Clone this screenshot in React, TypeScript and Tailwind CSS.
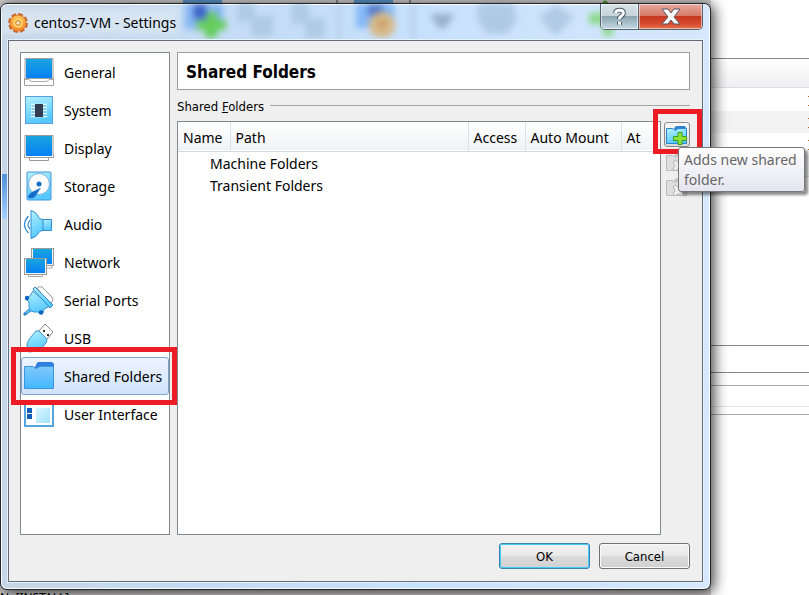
import type { ReactNode } from 'react';

const Monitor = ({ x = 0, y = 0, w = 29, h = 22 }: { x?: number; y?: number; w?: number; h?: number }) => (
  <g>
    <rect x={x + 0.5} y={y + 0.5} width={w - 1} height={h - 1} fill="#f2f2f2" stroke="#9a9a9a" />
    <rect x={x + 2} y={y + 1} width={w - 4} height={h - 3} fill="url(#screen)" />
  </g>
);

const icons: Record<string, ReactNode> = {
  General: (
    <>
      <path d="M.5 20v7.500h29V20" fill="#fff" stroke="#a0a0a0" />
      <path d="M1 .500h28v20H1z" fill="#f0f0f0" stroke="#a0a0a0" />
      <path d="M2 1h26v19H2z" fill="url(#screen)" />
      <path d="M1 21.500h4q1 2 3 2h14q2 0 3-2h4" fill="#fff" stroke="#aaa" />
    </>
  ),
  System: (
    <>
      <rect x="1.500" y=".5" width="27" height="27" fill="url(#cyan)" stroke="#5a9fe0" />
      <path d="M7 8.500h16M7 11.500h16M7 14.500h16M7 17.500h16M7 20.500h16" stroke="#e8fbff" strokeWidth="1.500" />
      <path d="M8 10h14M8 13h14M8 16h14M8 19h14" stroke="#6faec8" strokeWidth=".7" />
      <rect x="11" y="8" width="8" height="13" fill="#343c50" />
    </>
  ),
  Display: (
    <>
      <path d="M5.500 23v3.500h19V23" fill="#fff" stroke="#999" />
      <path d="M1 1.500h28V21h.5v2.500H.5V21H1z" fill="#fff" stroke="#999" />
      <rect x="2" y="2" width="26" height="20" fill="url(#screen)" />
    </>
  ),
  Storage: (
    <>
      <rect x="3" y="0" width="24" height="28" rx="1" fill="url(#cyan)" stroke="#4597db" />
      <circle cx="15" cy="12" r="10.500" fill="#fff" stroke="#7cb2dc" />
      <circle cx="15" cy="12" r="2.500" fill="#126cc8" />
      <path d="M4.500 24q1-3 4-4l8-4-5 8q-2 3-6 2-2 0-1-2z" fill="#126cc8" stroke="#3688d8" strokeWidth=".5" />
    </>
  ),
  Audio: (
    <>
      <path d="M18.500 9.500h9v11h-9z" fill="url(#cyan)" stroke="#318bd0" />
      <path d="M7 .500q5 1 8 7 1 2 4 2v11q-3 0-4 2-3 5-8 6z" fill="url(#cyan)" stroke="#318bd0" />
      <path d="M4.500 6Q-3.500 15 4.500 23M6 10q-4 5 0 9" fill="none" stroke="#318bd0" strokeWidth="1.200" />
    </>
  ),
  Network: (
    <>
      <path d="M22 18v2h6v-2" fill="#fff" stroke="#aaa" />
      <Monitor x={7} y={0} w={23} h={18} />
      <path d="M4.500 26v2.500h14V26" fill="#fff" stroke="#aaa" />
      <Monitor x={0} y={10} w={23} h={17} />
    </>
  ),
  'Serial Ports': (
    <>
      <path d="M13 2q2-2 5-1l10 10q2 3 0 5l-2 2z" fill="#fff" stroke="#999" />
      <path d="M1 28l5-4" stroke="#2e89ce" strokeWidth="3.500" strokeLinecap="round" />
      <path d="M2 27l4-3" stroke="#6dccfa" strokeWidth="1.500" />
      <path d="M9 5l-3 5-4 2q-1 2 1 2l2 2v5q0 4 5 5h4l3 2 2-1 1-4 6-3z" fill="url(#cyan)" stroke="#3693d5" strokeLinejoin="round" />
      <path d="M9 3l2-2 18 18-3 3z" fill="url(#cyan)" stroke="#2e89ce" strokeLinejoin="round" />
      <circle cx="3" cy="12" r="2.200" fill="#1264bd" />
      <circle cx="17" cy="26.500" r="2.200" fill="#1264bd" />
    </>
  ),
  USB: (
    <>
      <path d="M15 7l6-7 8 8-6 7z" fill="#fff" stroke="#888" />
      <path d="M19 6h2v2h-2zM23 10h2v2h-2z" fill="#333" />
      <path d="M3 27V20q1-4 4-7l5-6q2-1 4 1l6 6q2 2 0 5l-5 6q-4 3-12 3z" fill="url(#cyan)" stroke="#4196d8" />
    </>
  ),
  'Shared Folders': (
    <>
      <path d="M11 5l2-4q0-1 2-1h13l2 2v8H11z" fill="#2f7fe2" />
      <path d="M.5 4.500H9l3 2 4-2h13.500v22H.5z" fill="url(#folder)" stroke="#3d94df" />
    </>
  ),
  'User Interface': (
    <>
      <rect x="1" y="1" width="28" height="25" fill="#fff" stroke="#55a5e0" strokeWidth="2" />
      <rect x="1" y="1" width="28" height="4" fill="#1e69c6" />
      <path d="M3 8h5v5H3zM3 14h5v5H3z" fill="#125eb8" />
      <rect x="12" y="8" width="14" height="15" fill="url(#pale)" />
    </>
  ),
};

const sections = Object.keys(icons);

const Callout = ({ className }: { className: string }) => (
  <span className={`pointer-events-none absolute z-10 border-[5px] border-[#ed1c24] ${className}`} />
);

const Defs = () => (
  <svg className="absolute size-0" aria-hidden="true">
    <defs>
      <linearGradient id="screen" x2="0" y2="1"><stop stopColor="#18a5dd" /><stop offset="1" stopColor="#0580f7" /></linearGradient>
      <linearGradient id="cyan" x2="0.3" y2="1"><stop stopColor="#b4f2ff" /><stop offset="1" stopColor="#55c8ff" /></linearGradient>
      <linearGradient id="folder" x2="0" y2="1"><stop stopColor="#80c8fa" /><stop offset="1" stopColor="#42b8ff" /></linearGradient>
      <linearGradient id="pale" x2="1" y2="1"><stop stopColor="#d8f6ff" /><stop offset="1" stopColor="#a5e3fa" /></linearGradient>
      <linearGradient id="gear" x2="0" y2="1"><stop stopColor="#ffc15a" /><stop offset="1" stopColor="#f58a26" /></linearGradient>
    </defs>
  </svg>
);

const Gear = () => (
  <svg viewBox="0 0 20 20" className="size-5 shrink-0" aria-hidden="true">
    <circle cx="10" cy="10" r="8" fill="none" stroke="#c9682c" strokeWidth="4" strokeDasharray="4.300 1.980" />
    <circle cx="10" cy="10" r="8" fill="url(#gear)" stroke="#d97a25" />
    <circle cx="10" cy="10" r="5" fill="#ffcf68" />
    <circle cx="10" cy="10" r="2.200" fill="#fff1d5" stroke="#c87325" />
  </svg>
);

const GlassReflections = () => (
  <svg className="pointer-events-none absolute inset-x-0 top-0 h-9 w-full" aria-hidden="true">
    <g className="blur-[3px]">
      <path d="M0 4h178v26H0z" fill="#e6edf5" opacity=".55" />
      <path d="M184 0h38v25h-38z" fill="#85b5f3" />
      <path d="M193 0h12v15h-12z" fill="#3c62c4" />
      <path d="M206 8h10v8h9v10h-9v8h-12v-8h-8V16h10z" fill="#66cd5c" />
      <g fill="#b1cae3">
        <path d="M236 0h18v12h18v20h-22V18h-14zM290 0h18v14h16v20h-20V20h-14z" />
        <path d="M477 0h36l3 16-10 14h-20l-10-14zM538 13l16-12 19 12-19 19z" />
      </g>
      <path d="M338 0v38M412 0v38" stroke="#b1c8e0" strokeWidth="3" />
      <path d="M355 0h38v24h-38z" fill="#85b8f6" />
      <path d="M367 0h15v12h-15z" fill="#557bcc" />
      <circle cx="381" cy="21" r="13" fill="#d6b987" />
      <circle cx="381" cy="20" r="4" fill="#ca9665" />
      <path d="M430 10h24l-10 14h-6l-6-8z" fill="#98b0ca" />
      <path d="M588 9h14V0h10v10h18v10h-18v12h-10V20h-14z" fill="#8bd98a" />
    </g>
  </svg>
);

const FolderTool = ({ add = false }: { add?: boolean }) => (
  <svg viewBox="0 0 22 20" className="h-5 w-[22px]" aria-hidden="true">
    <path d="M8 4l1-2q1-1 2-1h8l1 2v4H8z" fill={add ? '#3181cd' : '#c8c8c8'} />
    <path d="M.5 3.500H7l2 2 3-2h8.500v15H.5z" fill={add ? 'url(#cyan)' : '#dedede'} stroke={add ? '#2a87cf' : '#bcbcbc'} />
    {add ? (
      <path d="M12 7.500h4v4h4.500v4H16v4h-4v-4H7.500v-4H12z" fill="#8be334" stroke="#3d9d1c" />
    ) : (
      <path d="M9 8l3 2 4-2 2 2-2 3 2 4-2 2-4-2-3 2-2-2 2-4-2-3z" fill="#eee" stroke="#b4b4b4" />
    )}
  </svg>
);

const Background = () => (
  <div className="absolute inset-0 overflow-hidden bg-white" aria-hidden="true">
    <div className="flex h-full">
      <div className="flex flex-1 flex-col justify-between bg-[#d5d3d3]">
        <svg className="h-1 w-full">
          <path d="M183 0h39v4h-39zM354 0h39v4h-39z" fill="#5c9bcf" />
          <path d="M337 0v4M410 0v4" stroke="#444" />
          <path d="M601 4l4-4 5 4z" fill="#58a931" />
        </svg>
        <p className="h-1 overflow-hidden text-[12px] leading-[13px] text-black">N, [INSTALL]</p>
      </div>
      <div className="flex w-[98px] flex-col">
        <div className="h-[59px] border-b border-[#858491]" />
        <div className="h-[29px] border-b border-[#ddd] bg-gradient-to-b from-white to-[#f0f0f2]" />
        <div className="h-[23px]" />
        <div className="h-[22px] bg-[#f3f3f3]" />
        <div className="h-[22px]" />
        <div className="h-[22px] border-b border-[#ddd] bg-[#f4f4f4]" />
        <div className="h-[169px] border-b border-[#858491]" />
        <div className="h-[27px] border-b border-[#858491]" />
        <div className="h-[13px] border-b border-[#aaa]" />
        <div className="h-[21px] border-b border-[#e1e3eb]" />
        <div className="h-2 border-b border-[#aaa9b1]" />
      </div>
    </div>
    <svg className="absolute top-[96px] right-0 h-[62px] w-px">
      <path d="M0 0h1v1H0zM0 9h1v1H0zM0 22h1v1H0zM0 31h1v1H0zM0 44h1v1H0zM0 53h1v1H0z" fill="#b06a2c" />
    </svg>
  </div>
);

export default function App() {
  return (
    <div className="relative isolate flex min-h-screen overflow-hidden font-['Noto_Sans','Open_Sans',sans-serif] text-[14px] leading-5 text-black">
      <Defs />
      <Background />
      <main className="relative mt-[3px] mr-[98px] mb-[5px] flex flex-1 flex-col rounded-[7px] border border-[#20252c] bg-[#c7dffa] bg-[linear-gradient(to_right,#c7d6e6_0%,#c4dcf5_30%,#c8e1fc_60%,#d5e8fd_100%)] px-[7px] pb-[7px] shadow-[2px_2px_14px_1px_rgba(0,0,0,0.75),inset_0_0_0_1px_white]">
        <GlassReflections />
        <span className="pointer-events-none absolute top-[170px] left-px h-[45px] w-1.5 bg-gradient-to-b from-[#4e8fd8] to-[#a5d0ff]" />
        <header className="relative flex h-9 shrink-0 items-start justify-between">
          <div className="flex items-center gap-1.5 pt-[9px]">
            <Gear />
            <h1>centos7-VM - Settings</h1>
          </div>
          <div className="flex h-[26px] overflow-hidden rounded-b-[5px] border border-t-0 border-[#59616e]">
            <button aria-label="Help" className="w-[38px] border-r border-[#59616e] bg-[linear-gradient(to_bottom,#d9e3e9_0%,#c4d3d7_48%,#8ba5ae_50%,#c5d9e7_100%)] shadow-[inset_0_0_0_1px_#ffffff90]">
              <svg viewBox="0 0 38 25" className="h-full w-full"><path d="M15 9q0-3 4-3t4 3q0 2-2 3l-2 2v1M19 18v3" fill="none" stroke="#4c5766" strokeWidth="5" /><path d="M15 9q0-3 4-3t4 3q0 2-2 3l-2 2v1M19 18v3" fill="none" stroke="#fff" strokeWidth="3" /></svg>
            </button>
            <button aria-label="Close" className="w-[63px] bg-[linear-gradient(to_bottom,#e7a99c_0%,#d77b69_46%,#c43822_48%,#d84b2f_80%,#e27750_100%)] shadow-[inset_0_0_0_1px_#ffffff80]">
              <svg viewBox="0 0 63 25" className="h-full w-full"><path d="M23 5h6l3 4 3-4h6l-6 8 6 7h-6l-3-4-3 4h-6l6-7z" fill="#fafafa" stroke="#555969" /></svg>
            </button>
          </div>
        </header>

        <div className="relative flex flex-1 flex-col gap-2 border border-[#626c7a] bg-[#efefef] pt-[11px] pr-3 pb-3 pl-[11px] shadow-[0_0_0_1px_#e4f2ff]">
          <div className="flex flex-1 gap-[7px]">
            <nav className="w-[150px] shrink-0 border border-[#828790] bg-white">
              <ul>
                {sections.map((name) => {
                  const selected = name === 'Shared Folders';
                  return (
                    <li key={name} className="relative">
                      <button
                        aria-current={selected ? 'page' : undefined}
                        className={`flex h-[38px] w-full items-center gap-2.5 rounded-[3px] border pl-0.5 text-left whitespace-nowrap ${selected ? 'border-[#7da2ce] bg-gradient-to-b from-[#edf4fe] to-[#d0e3fc]' : 'border-transparent'}`}
                      >
                        <svg viewBox="0 -1 30 30" className="h-[30px] w-[30px] shrink-0 overflow-visible" aria-hidden="true">{icons[name]}</svg>
                        <span className="pt-0.5">{name}</span>
                      </button>
                      {selected && <Callout className="-top-2.5 -right-2 -bottom-2.5 -left-2.5" />}
                    </li>
                  );
                })}
              </ul>
            </nav>

            <section className="flex min-w-0 flex-1 flex-col">
              <h2 className="flex h-[38px] items-center border border-[#9d9d9d] bg-white px-2 pt-0.5 font-['DejaVu_Sans_Condensed','DejaVu_Sans',sans-serif] text-[17px] font-bold">Shared Folders</h2>
              <div className="flex h-[31px] items-center gap-1.5 font-['DejaVu_Sans_Condensed','DejaVu_Sans',sans-serif] text-[13px]">
                <h3 className="pt-0.5">Shared <u>F</u>olders</h3>
                <span className="h-px flex-1 bg-[#a5a5a5]" />
              </div>
              <div className="flex flex-1 gap-[3px]">
                <div className="min-w-0 flex-1 border border-[#828790] bg-white">
                  <table className="w-full table-fixed border-collapse text-left whitespace-nowrap">
                    <colgroup>
                      <col className="w-[52px]" />
                      <col />
                      <col className="w-[57px]" />
                      <col className="w-[96px]" />
                      <col className="w-[39px]" />
                    </colgroup>
                    <thead>
                      <tr className="h-[29px] border-b border-[#d5d5d5] bg-gradient-to-b from-white to-[#f1f2f4]">
                        {['Name', 'Path', 'Access', 'Auto Mount', 'At'].map((title) => (
                          <th key={title} scope="col" className="border-r border-[#dfe0e2] p-0 pt-[3px] pl-[5px] font-normal last:border-r-0">{title}</th>
                        ))}
                      </tr>
                    </thead>
                    <tbody>
                      <tr><td colSpan={5} className="h-6 p-0 pt-0.5 pl-8">Machine Folders</td></tr>
                      <tr><td colSpan={5} className="h-[22px] p-0 pl-8">Transient Folders</td></tr>
                    </tbody>
                  </table>
                </div>

                <div className="flex w-[26px] shrink-0 flex-col items-center gap-[5px] pt-px">
                  <div className="relative">
                    <button aria-label="Add shared folder" aria-describedby="add-tip" className="flex h-[25px] w-[26px] items-center justify-center rounded-[3px] border border-[#8b8b8b] bg-gradient-to-b from-[#f8f8f8] to-[#d9d9d9]">
                      <FolderTool add />
                    </button>
                    <Callout className="-top-[13px] -right-3 -bottom-[7px] -left-[11px]" />
                    <div id="add-tip" role="tooltip" className="absolute top-[25px] left-3.5 z-20 w-[127px] rounded-[3px] border border-[#767676] bg-gradient-to-b from-white to-[#e4e5f0] px-[5px] pt-0.5 pb-px text-[#666] shadow-[3px_3px_3px_#0007]">
                      Adds new shared folder.
                    </div>
                  </div>
                  <button disabled aria-label="Edit shared folder"><FolderTool /></button>
                  <button disabled aria-label="Remove shared folder"><FolderTool /></button>
                </div>
              </div>
            </section>
          </div>

          <footer className="flex justify-end gap-[9px] font-['DejaVu_Sans_Condensed','DejaVu_Sans',sans-serif] text-[13px]">
            <button className="h-[26px] w-[91px] rounded-[3px] border border-[#3c7fb1] bg-[linear-gradient(to_bottom,#f2f2f2_0%,#e9e9e9_49%,#dcdcdc_50%,#d0d0d0_100%)] pt-px shadow-[inset_0_0_0_1px_#40d0f7]">OK</button>
            <button className="h-[26px] w-[91px] rounded-[3px] border border-[#707070] bg-[linear-gradient(to_bottom,#f2f2f2_0%,#e9e9e9_49%,#dcdcdc_50%,#d0d0d0_100%)] pt-px shadow-[inset_0_0_0_1px_#fafafa]">Cancel</button>
          </footer>
        </div>
      </main>
    </div>
  );
}
